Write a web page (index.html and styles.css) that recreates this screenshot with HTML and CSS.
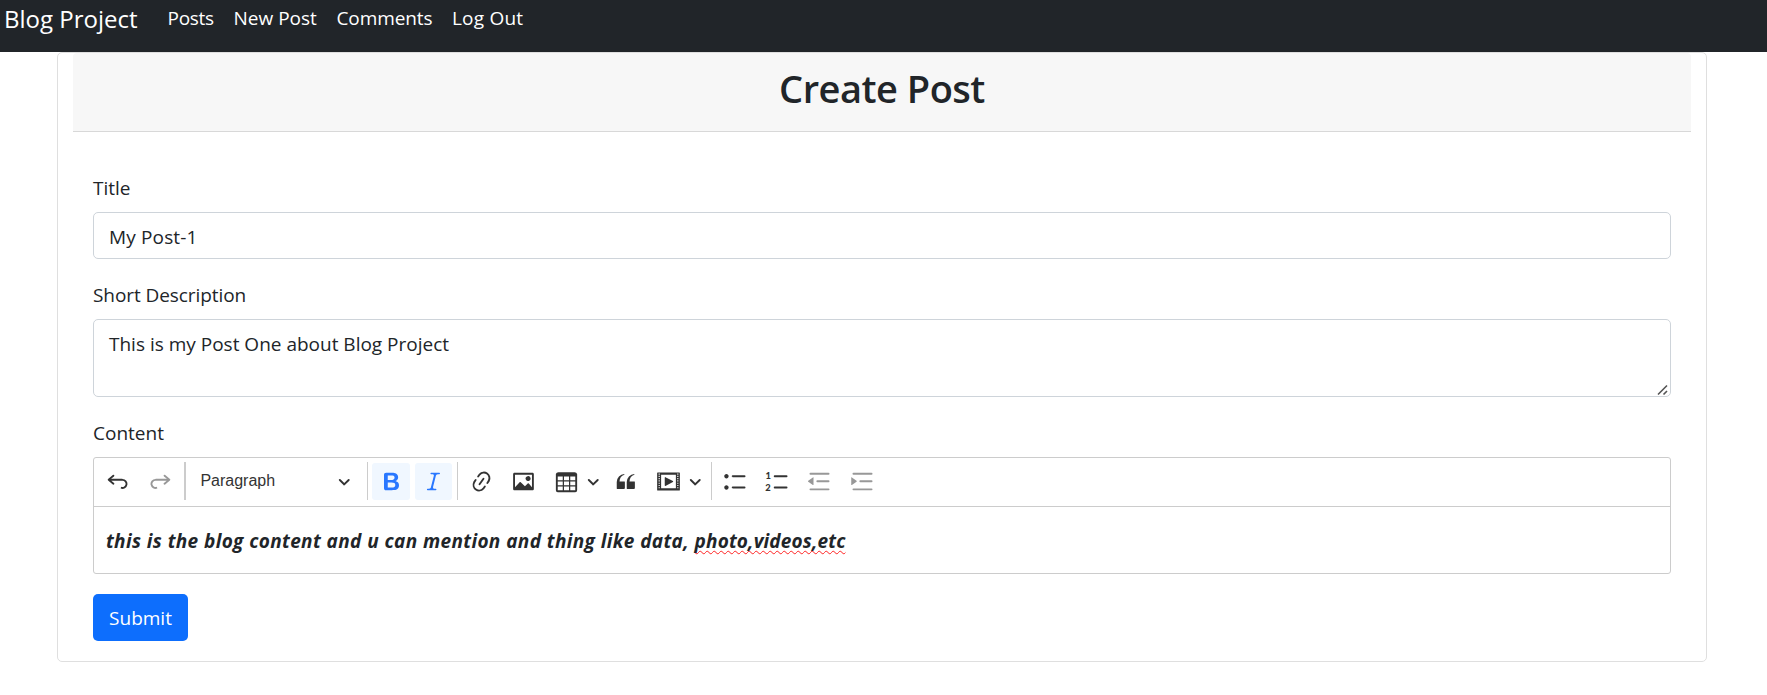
FILE: index.html
```html
<!DOCTYPE html>
<html lang="en">
<head>
<meta charset="utf-8">
<title>Create Post</title>
<link rel="stylesheet" href="styles.css">
</head>
<body>
<nav class="navbar">
  <a class="brand">Blog Project</a>
  <a class="nav-link n1">Posts</a>
  <a class="nav-link n2">New Post</a>
  <a class="nav-link n3">Comments</a>
  <a class="nav-link n4">Log Out</a>
</nav>
<main class="card">
  <header class="card-header"><h1>Create Post</h1></header>
  <form class="card-body">
    <label class="label">Title</label>
    <div class="control title">My Post-1</div>
    <label class="label short">Short Description</label>
    <div class="control area">This is my Post One about Blog Project
      <svg class="grip" width="12" height="12" viewBox="0 0 12 12"><path d="M1 10.5L10 1.500M6.500 10.500L10 7" stroke="#555" stroke-width="1.6" fill="none"/></svg>
    </div>
    <label class="label">Content</label>
    <section class="editor">
      <div class="toolbar">
        <span class="btn"><svg class="icon" viewBox="0 0 20 20"><path d="m5.042 9.367 2.189 1.837a.75.75 0 0 1-.965 1.149l-3.788-3.18a.747.747 0 0 1-.21-.284.75.75 0 0 1 .17-.945L6.23 4.762a.75.75 0 1 1 .964 1.15L4.863 7.866h8.917A.75.75 0 0 1 14 7.9a4 4 0 1 1-1.477 7.718l.344-1.489a2.5 2.5 0 1 0 1.094-4.73l.008-.032H5.042z"/></svg></span>
        <span class="btn off"><svg class="icon" viewBox="0 0 20 20"><path d="m14.958 9.367-2.189 1.837a.75.75 0 0 0 .965 1.149l3.788-3.18a.747.747 0 0 0 .21-.284.75.75 0 0 0-.17-.945L13.77 4.762a.75.75 0 1 0-.964 1.15l2.331 1.955H6.22A.75.75 0 0 0 6 7.9a4 4 0 1 0 1.477 7.718l-.344-1.489A2.5 2.5 0 1 1 6.039 9.4l-.008-.032h8.927z"/></svg></span>
        <i class="sep thick"></i>
        <span class="heading">Paragraph<svg class="arrow" viewBox="0 0 10 10"><path d="M.941 4.523a.75.75 0 1 1 1.06-1.06l3.006 3.005 3.005-3.005a.75.75 0 1 1 1.06 1.06l-3.549 3.55a.75.75 0 0 1-1.168-.136L.941 4.523z"/></svg></span>
        <i class="sep"></i>
        <span class="btn on"><svg class="icon" viewBox="0 0 20 20"><path d="M10.187 17H5.773c-.637 0-1.092-.138-1.364-.415-.273-.277-.409-.718-.409-1.323V4.738c0-.617.14-1.062.419-1.332.279-.27.73-.406 1.354-.406h4.68c.69 0 1.288.041 1.793.124.506.083.96.242 1.36.478.341.197.644.447.906.75a3.262 3.262 0 0 1 .808 2.162c0 1.401-.722 2.426-2.167 3.075C15.05 10.175 16 11.315 16 13.01a3.756 3.756 0 0 1-2.296 3.504 6.1 6.1 0 0 1-1.517.377c-.571.073-1.238.11-2 .11zm-.217-6.217H7v4.087h3.069c1.977 0 2.965-.69 2.965-2.072 0-.707-.256-1.22-.768-1.537-.512-.319-1.277-.478-2.296-.478zM7 5.13v3.619h2.606c.729 0 1.292-.067 1.69-.2a1.6 1.6 0 0 0 .91-.765c.165-.267.247-.566.247-.897 0-.707-.26-1.176-.778-1.409-.519-.232-1.31-.348-2.375-.348H7z"/></svg></span>
        <span class="btn on"><svg class="icon" viewBox="0 0 20 20"><path d="m9.586 14.633.021.004c-.036.335.095.655.393.962.082.083.173.15.274.201h1.474a.6.6 0 1 1 0 1.2H5.304a.6.6 0 0 1 0-1.2h1.15c.474-.07.809-.182 1.005-.334.157-.122.291-.32.404-.597l2.416-9.55a1.053 1.053 0 0 0-.281-.823 1.12 1.12 0 0 0-.442-.296H8.15a.6.6 0 0 1 0-1.2h6.443a.6.6 0 1 1 0 1.2h-1.195c-.376.056-.65.155-.823.296-.215.175-.423.439-.623.79l-2.366 9.347z"/></svg></span>
        <i class="sep"></i>
        <span class="btn"><svg class="icon" viewBox="0 0 20 20"><path d="m11.077 15 .991-1.416a.75.75 0 1 1 1.229.86l-1.148 1.64a.748.748 0 0 1-.217.206 5.251 5.251 0 0 1-8.503-5.955.741.741 0 0 1 .12-.274l1.147-1.639a.75.75 0 1 1 1.228.86L4.933 10.7l.006.003a3.75 3.75 0 0 0 6.132 4.294l.006.004zm5.494-5.335a.748.748 0 0 1-.12.274l-1.147 1.639a.75.75 0 1 1-1.228-.86l.86-1.23a3.75 3.75 0 0 0-6.144-4.301l-.86 1.229a.75.75 0 0 1-1.229-.86l1.148-1.64a.748.748 0 0 1 .217-.206 5.251 5.251 0 0 1 8.503 5.955zm-4.563-2.532a.75.75 0 0 1 .184 1.045l-3.155 4.505a.75.75 0 1 1-1.229-.86l3.155-4.506a.75.75 0 0 1 1.045-.184z"/></svg></span>
        <span class="btn"><svg class="icon" viewBox="0 0 20 20"><path d="M6.91 10.54c.26-.23.64-.21.88.03l3.36 3.14 2.23-2.06a.64.64 0 0 1 .87 0l2.52 2.97V4.5H3.2v10.12l3.71-4.08zm10.27-7.51c.6 0 1.09.47 1.09 1.05v11.84c0 .59-.49 1.06-1.09 1.06H2.79c-.6 0-1.09-.47-1.09-1.06V4.08c0-.58.49-1.05 1.1-1.05h14.38zm-5.22 5.56a1.96 1.96 0 1 1 3.4-1.96 1.96 1.96 0 0 1-3.4 1.96z"/></svg></span>
        <span class="split"><span class="btn"><svg class="icon" viewBox="0 0 20 20"><path d="M3 6v3h4V6H3zm0 4v3h4v-3H3zm0 4v3h4v-3H3zm5 3h4v-3H8v3zm5 0h4v-3h-4v3zm4-4v-3h-4v3h4zm0-4V6h-4v3h4zm1.500 8a1.500 1.500 0 0 1-1.500 1.500H3A1.500 1.500 0 0 1 1.500 17V4c.222-.863 1.068-1.500 2-1.500h13c.932 0 1.778.637 2 1.500v13zM12 13v-3H8v3h4zm0-4V6H8v3h4z"/></svg></span><svg class="arrow" viewBox="0 0 10 10"><path d="M.941 4.523a.75.75 0 1 1 1.06-1.06l3.006 3.005 3.005-3.005a.75.75 0 1 1 1.06 1.06l-3.549 3.55a.75.75 0 0 1-1.168-.136L.941 4.523z"/></svg></span>
        <span class="btn"><svg class="icon" viewBox="0 0 20 20"><path d="M3 10.423a6.500 6.500 0 0 1 6.056-6.408l.038.67C6.448 5.423 5.354 7.663 5.220 10H9c.552 0 .5.432.5.986v4.511c0 .554-.448.503-1 .503h-5c-.552 0-.5-.449-.5-1.003v-4.574zm8 0a6.500 6.500 0 0 1 6.056-6.408l.038.67c-2.646.739-3.740 2.979-3.873 5.315H17c.552 0 .5.432.5.986v4.511c0 .554-.448.503-1 .503h-5c-.552 0-.5-.449-.5-1.003v-4.574z"/></svg></span>
        <span class="split media"><span class="btn"><svg class="icon" viewBox="0 0 22 20"><path fill-rule="evenodd" d="M1.500 2H20.500a.5.5 0 0 1 .5.5V17.500a.5.5 0 0 1-.5.500H1.500a.5.5 0 0 1-.5-.500V2.500a.5.5 0 0 1 .5-.500zM4.500 4V16H17.500V4zM2.300 3h1v1h-1zm0 2h1v1h-1zm0 2h1v1h-1zm0 2h1v1h-1zm0 2h1v1h-1zm0 2h1v1h-1zm0 2h1v1h-1zM18.700 3h1v1h-1zm0 2h1v1h-1zm0 2h1v1h-1zm0 2h1v1h-1zm0 2h1v1h-1zm0 2h1v1h-1zm0 2h1v1h-1z"/><path d="M7.700 6.500a.4.4 0 0 1 .6-.35l6.600 3.500a.4.4 0 0 1 0 .7l-6.600 3.500a.4.4 0 0 1-.6-.35z"/></svg></span><svg class="arrow" viewBox="0 0 10 10"><path d="M.941 4.523a.75.75 0 1 1 1.06-1.06l3.006 3.005 3.005-3.005a.75.75 0 1 1 1.06 1.06l-3.549 3.55a.75.75 0 0 1-1.168-.136L.941 4.523z"/></svg></span>
        <i class="sep"></i>
        <span class="btn"><svg class="icon" viewBox="0 0 20 20"><path d="M7 5.750c0 .414.336.75.75.75h9.500a.75.75 0 1 0 0-1.500h-9.500a.75.75 0 0 0-.75.75zm-6 0C1 4.784 1.777 4 2.750 4c.966 0 1.750.777 1.750 1.750 0 .966-.777 1.750-1.750 1.750C1.784 7.500 1 6.723 1 5.750zm6 9c0 .414.336.75.75.75h9.500a.75.75 0 1 0 0-1.500h-9.500a.75.75 0 0 0-.75.75zm-6 0c0-.966.777-1.750 1.750-1.750.966 0 1.750.777 1.750 1.750 0 .966-.777 1.750-1.750 1.750-.966 0-1.750-.777-1.750-1.750z"/></svg></span>
        <span class="btn"><svg class="icon" viewBox="0 0 20 20"><path d="M7.750 5h9.500a.75.75 0 0 1 0 1.500h-9.500a.75.75 0 0 1 0-1.500zm0 9h9.500a.75.75 0 0 1 0 1.500h-9.500a.75.75 0 0 1 0-1.500z"/><text class="digit" x="0.400" y="7.900">1</text><text class="digit" x="0.200" y="17.900">2</text></svg></span>
        <span class="btn off"><svg class="icon" viewBox="0 0 20 20"><path d="M2.750 3h14.500a.75.75 0 0 1 0 1.500H2.750a.75.75 0 0 1 0-1.500zm5.500 6h9a.75.75 0 0 1 0 1.500h-9a.75.75 0 0 1 0-1.500zm-5.500 6.500h14.500a.75.75 0 0 1 0 1.500H2.750a.75.75 0 0 1 0-1.500zM1 9.400l3.700-2.700a.3.3 0 0 1 .5.300v5.500a.3.3 0 0 1-.5.300L1 10.100a.4.4 0 0 1 0-.7z"/></svg></span>
        <span class="btn off"><svg class="icon" viewBox="0 0 20 20"><path d="M2.750 3h14.500a.75.75 0 0 1 0 1.500H2.750a.75.75 0 0 1 0-1.500zm5.500 6h9a.75.75 0 0 1 0 1.500h-9a.75.75 0 0 1 0-1.500zm-5.500 6.500h14.500a.75.75 0 0 1 0 1.500H2.750a.75.75 0 0 1 0-1.500zM5.200 9.400L1.500 6.700a.3.3 0 0 0-.5.300v5.500a.3.3 0 0 0 .5.300l3.700-2.700a.4.4 0 0 0 0-.7z"/></svg></span>
      </div>
      <div class="editable">this is the blog content and u can mention and thing like data, <span class="spell">photo,videos,etc</span></div>
    </section>
    <button class="submit" type="button">Submit</button>
  </form>
</main>
</body>
</html>
```
FILE: styles.css
```css
* { box-sizing: border-box; }
body {
  margin: 0;
  background: #fff;
  color: #212529;
  font: 19px/30px "Open Sans", "Noto Sans", sans-serif;
}
.navbar {
  display: flex;
  align-items: flex-start;
  height: 52px;
  padding-left: 4px;
  background: #212529;
  color: #fff;
  white-space: nowrap;
}
.brand { font-size: 24px; line-height: 37px; width: 163.5px; }
.nav-link { line-height: 37px; }
.n1 { width: 66px; letter-spacing: -0.3px; }
.n2 { width: 103px; }
.n3 { width: 115.5px; letter-spacing: -0.1px; }
.n4 { letter-spacing: 0.2px; }
.card {
  width: 1650px;
  height: 610px;
  margin-left: 57px;
  padding: 0 15px;
  border: 1px solid #dfdfdf;
  border-radius: 5px;
}
.card-header {
  height: 79px;
  background: #f7f7f7;
  border-bottom: 1px solid #d8d8d8;
  border-radius: 4px 4px 0 0;
  text-align: center;
}
h1 {
  margin: 0;
  font-size: 38px;
  font-weight: 600;
  line-height: 70px;
  letter-spacing: -0.5px;
}
.card-body { padding: 40px 20px 0; }
.label { display: block; height: 30px; line-height: 32px; margin-bottom: 10px; }
.short { letter-spacing: -0.08px; }
.control {
  height: 47px;
  margin-bottom: 20px;
  padding: 9px 15px 0;
  border: 1px solid #ced4da;
  border-radius: 5px;
}
.title { letter-spacing: 0.15px; }
.area { position: relative; height: 78px; }
.grip { position: absolute; right: 1px; bottom: 0; }
.editor { height: 117px; border: 1px solid #ccc; border-radius: 3px; }
.toolbar {
  display: flex;
  align-items: center;
  gap: 4.8px;
  height: 49px;
  padding: 0 0 2px 5px;
  border-bottom: 1px solid #ccc;
}
.btn {
  display: flex;
  flex: none;
  align-items: center;
  justify-content: center;
  width: 37.5px;
  height: 37px;
  border-radius: 3px;
}
.icon { width: 25px; height: 25px; fill: #333; }
.off .icon { opacity: .5; }
.on { background: #f0f7ff; }
.on .icon { fill: #2977ff; }
.sep { flex: none; width: 1px; height: 38px; background: #ccc; }
.thick { width: 2px; }
.heading {
  display: flex;
  align-items: center;
  justify-content: space-between;
  width: 171.5px;
  padding: 0 11.5px 0 10px;
  color: #333;
  font: 16px/24px "Liberation Sans", sans-serif;
}
.arrow { flex: none; width: 12.5px; height: 12.5px; fill: #333; }
.split { display: flex; align-items: center; width: 54.7px; }
.split .arrow { margin-left: 2px; }
.media { width: 56.7px; }
.digit { font: 900 7.5px Lato, sans-serif; }
.editable {
  padding: 19px 12px;
  font-weight: 700;
  font-style: italic;
  letter-spacing: 0.33px;
  word-spacing: 0.3px;
}
.spell {
  letter-spacing: 0.15px;
  text-decoration: underline wavy #f22 1.3px;
  text-decoration-skip-ink: none;
  text-underline-offset: 2px;
}
.submit {
  display: block;
  width: 95px;
  height: 47px;
  margin-top: 20px;
  padding: 0;
  border: 0;
  border-radius: 5px;
  background: #0d6efd;
  color: #fff;
  font: inherit;
}
```
